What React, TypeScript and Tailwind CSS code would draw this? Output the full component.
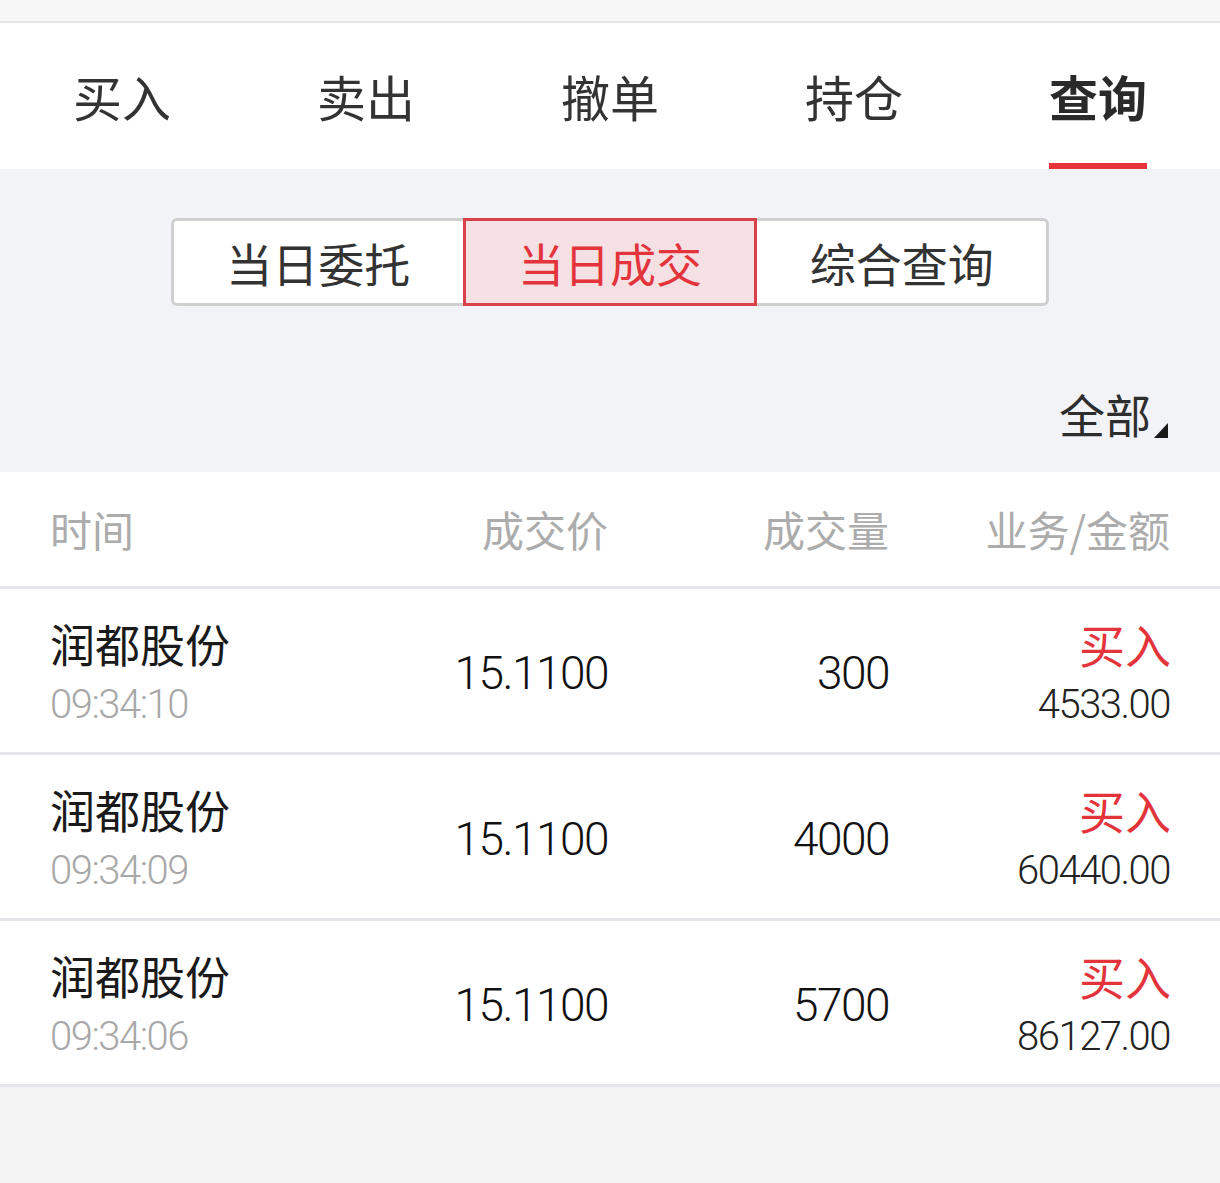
import React from 'react';

const TABS = ['买入', '卖出', '撤单', '持仓', '查询'];
const SEGMENTS = ['当日委托', '当日成交', '综合查询'];

const ROWS = [
  { name: '润都股份', time: '09:34:10', price: '15.1100', qty: '300', side: '买入', amount: '4533.00' },
  { name: '润都股份', time: '09:34:09', price: '15.1100', qty: '4000', side: '买入', amount: '60440.00' },
  { name: '润都股份', time: '09:34:06', price: '15.1100', qty: '5700', side: '买入', amount: '86127.00' },
];

const cjk = "font-['Noto_Sans_CJK_SC',sans-serif]";
const num = "font-['Roboto','Noto_Sans_CJK_SC',sans-serif] font-light";

export default function App() {
  return (
    <div className={`w-[1220px] h-[1183px] bg-[#f4f4f4] ${cjk}`}>
      {/* top strip */}
      <div className="h-[23px] bg-[#f7f7f7] border-b-2 border-[#e6e6ea]" />

      {/* main tabs */}
      <div className="grid grid-cols-5 h-[146px] bg-white">
        {TABS.map((t, i) => {
          const active = i === TABS.length - 1;
          return (
            <div key={t} className="relative flex items-center justify-center">
              <span
                className={`text-[49px] leading-none mt-[-2px] ${
                  active ? 'font-bold text-[#2a2a2a]' : 'text-[#333]'
                }`}
              >
                {t}
              </span>
              {active && (
                <div className="absolute bottom-0 left-1/2 -translate-x-1/2 w-[98px] h-[6px] bg-[#e8333a]" />
              )}
            </div>
          );
        })}
      </div>

      {/* filter area */}
      <div className="h-[303px] bg-[#f2f3f7] flex flex-col">
        <div className="pt-[49px] flex justify-center">
          <div className="flex w-[878px] h-[88px] bg-white border-[3px] border-[#cfcfcf] rounded-[6px]">
            {SEGMENTS.map((s, i) => {
              const active = i === 1;
              return (
                <div
                  key={s}
                  className={`flex-1 flex items-center justify-center text-[46px] leading-none ${
                    active
                      ? 'bg-[#f5e0e4] text-[#e3343c] border-[3px] border-[#d8404a] my-[-3px]'
                      : 'text-[#333]'
                  }`}
                >
                  {s}
                </div>
              );
            })}
          </div>
        </div>
        <div className="flex justify-end pr-[52px] mt-[84px]">
          <div className="flex items-end text-[#2d2d2d] text-[46px] leading-none">
            全部
            <svg width="14" height="15" viewBox="0 0 14 15" className="ml-[3px] mb-[-2px]">
              <polygon points="14,0 14,15 0,15" fill="#1a1a1a" />
            </svg>
          </div>
        </div>
      </div>

      {/* table header */}
      <div className="bg-white h-[117px] border-b-[3px] border-[#e6e6ea] grid grid-cols-[1fr_209px_281px_281px] pl-[50px] pr-[50px] items-center text-[42px] leading-none text-[#acacac]">
        <div>时间</div>
        <div className="text-right">成交价</div>
        <div className="text-right">成交量</div>
        <div className="text-right">业务/金额</div>
      </div>

      {/* rows */}
      {ROWS.map((r, i) => (
        <div
          key={i}
          className="bg-white h-[166px] border-b-[3px] border-[#e6e6ea] grid grid-cols-[1fr_209px_281px_281px] pl-[50px] pr-[50px] items-center"
        >
          <div className="flex flex-col pt-[4px]">
            <span className="text-[45px] leading-none text-[#1a1a1a]">{r.name}</span>
            <span className={`${num} text-[40px] leading-none tracking-[-1.5px] text-[#a8a8a8] mt-[19px]`}>{r.time}</span>
          </div>
          <div className={`${num} pt-[5px] text-right text-[46px] leading-none tracking-[-1.5px] text-[#111]`}>{r.price}</div>
          <div className={`${num} pt-[5px] text-right text-[46px] leading-none tracking-[-1.5px] text-[#111]`}>{r.qty}</div>
          <div className="flex flex-col items-end pt-[4px]">
            <span className="text-[46px] leading-none text-[#e3343c] mr-[-1px]">{r.side}</span>
            <span className={`${num} text-[40px] leading-none tracking-[-1.5px] text-[#222] mt-[19px]`}>{r.amount}</span>
          </div>
        </div>
      ))}
    </div>
  );
}
